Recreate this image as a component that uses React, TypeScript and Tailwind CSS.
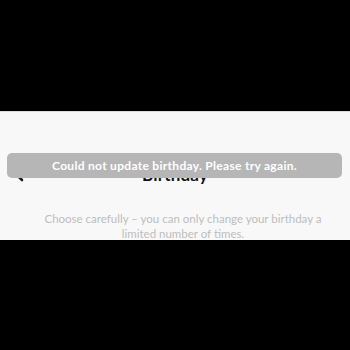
import React from 'react';

const App: React.FC = () => {
    return (
        <div className="w-[350px] h-[350px] bg-black flex flex-col overflow-hidden antialiased" style={{ fontFamily: 'Lato, "Noto Sans", sans-serif' }}>
            <div className="h-[111px] shrink-0"></div>

            <section className="relative h-[129px] shrink-0 bg-[#f8f8f8] border-t border-[#dcdcdc]">
                {/* Header */}
                <div className="relative flex items-center justify-center h-[24px] mt-[50px]">
                    <button className="absolute left-[12px] top-[2px] text-[#1a1a1a]">
                        <svg width="14" height="20" viewBox="0 0 14 20" fill="none">
                            <path d="M10 4 L4 10 L10 16" stroke="currentColor" strokeWidth="2.6" strokeLinecap="round" strokeLinejoin="round" />
                        </svg>
                    </button>
                    <h1 className="text-[17px] font-bold text-[#111] leading-none tracking-[0.2px]">Birthday</h1>
                </div>

                {/* Subtitle */}
                <p className="mt-[25px] pl-[42px] pr-[26px] text-center text-[11.5px] leading-[15px] text-[#bdbdbd]">
                    Choose carefully – you can only change your birthday a limited number of times.
                </p>

                {/* Toast */}
                <div className="absolute left-[7px] right-[8px] top-[41px] h-[25px] rounded-[5px] bg-[#b6b6b6] flex items-center justify-center">
                    <span className="text-white text-[12px] font-bold tracking-[0.3px]">
                        Could not update birthday. Please try again.
                    </span>
                </div>
            </section>

            <div className="flex-1"></div>
        </div>
    );
};

export default App;
